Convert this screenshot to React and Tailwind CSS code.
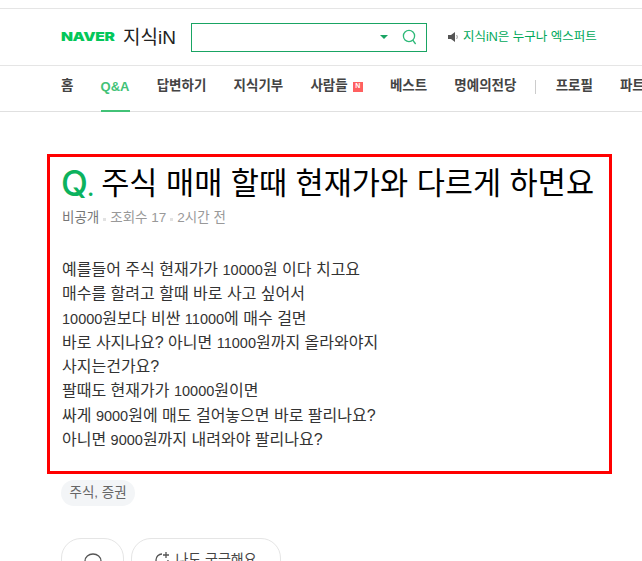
const NAV = [
  { label: '홈' },
  { label: 'Q&A', active: true },
  { label: '답변하기' },
  { label: '지식기부' },
  { label: '사람들', badge: true },
  { label: '베스트' },
  { label: '명예의전당' },
];

const BODY = [
  '예를들어 주식 현재가가 10000원 이다 치고요',
  '매수를 할려고 할때 바로 사고 싶어서',
  '10000원보다 비싼 11000에 매수 걸면',
  '바로 사지나요? 아니면 11000원까지 올라와야지',
  '사지는건가요?',
  '팔때도 현재가가 10000원이면',
  '싸게 9000원에 매도 걸어놓으면 바로 팔리나요?',
  '아니면 9000원까지 내려와야 팔리나요?',
];

const FONT = "font-['Liberation_Sans','Noto_Sans_CJK_KR',sans-serif]";

// digits run narrower than the hangul in the reference
function Line({ text }) {
  return (
    <p className="h-[24.3px]">
      {text.split(/(\d+)/).map((part, i) =>
        /\d/.test(part) ? (
          <span key={i} className="text-[14.5px] leading-none">
            {part}
          </span>
        ) : (
          part
        ),
      )}
    </p>
  );
}

function Dot() {
  return <span className="mx-[4px] inline-block h-[3px] w-[3px] bg-[#e2e2e2] align-[1px]" />;
}

export default function App() {
  return (
    <div className={`h-[561px] w-[642px] overflow-hidden bg-white ${FONT}`}>
      <div className="h-[8px]" />
      {/* Header */}
      <header className="flex h-[58px] items-center border-y border-[#e5e5e5] pl-[61px]">
        <span className="w-[55px] origin-left scale-x-[1.3] font-['Inter',sans-serif] text-[12px] leading-none font-black tracking-[-0.3px] text-[#03c75a]">
          NAVER
        </span>
        <span className="ml-[7px] text-[19px] leading-none text-[#222]">지식iN</span>
        <div className="ml-[15px] flex h-[29px] w-[236px] items-center justify-end border border-[#19a463] pr-[9px]">
          <span className="mr-[14px] h-0 w-0 border-x-[4px] border-t-[4px] border-x-transparent border-t-[#19a463]" />
          <svg width="15" height="16" viewBox="0 0 15 16" fill="none" stroke="#2db978" strokeWidth="1.3">
            <circle cx="7" cy="7" r="5.6" />
            <path d="M10.8 11.2 13.6 15" />
          </svg>
        </div>
        <svg className="ml-[21px]" width="11" height="10" viewBox="0 0 11 10">
          <path d="M0 3h3l4-3v10L3 7H0z" fill="#555" />
          <path d="M8.5 3c1 1 1 3 0 4" stroke="#999" fill="none" />
        </svg>
        <span className="ml-[4px] text-[12.5px] whitespace-nowrap text-[#00a85a]">지식iN은 누구나 엑스퍼트</span>
      </header>

      {/* Nav */}
      <nav className="flex h-[46px] items-center border-b border-[#e0e0e0] pb-[4px] pl-[61px] text-[13.5px] whitespace-nowrap text-[#444]">
        {NAV.map((item) => (
          <div
            key={item.label}
            className={`relative mr-[27.2px] flex h-full shrink-0 items-center font-semibold ${item.active ? 'text-[13px] text-[#42c277]' : ''}`}
          >
            {item.label}
            {item.badge && (
              <span className="ml-[5px] flex h-[10px] w-[10px] items-center justify-center bg-[#ff6060] text-[7px] font-bold text-white">
                N
              </span>
            )}
            {item.active && <span className="absolute right-0 -bottom-[5px] left-0 h-[2px] bg-[#42c277]" />}
          </div>
        ))}
        <span className="-ml-[9px] h-[14px] w-px shrink-0 bg-[#ccc]" />
        <span className="ml-[20px] shrink-0 font-semibold">프로필</span>
        <span className="ml-[27px] shrink-0 font-semibold">파트너</span>
      </nav>

      {/* Question */}
      <main className="mt-[42px] ml-[47px] h-[320px] w-[565px] border-[3px] border-[#ff0000] pt-[3px] pl-[12px]">
        <div className="flex items-center">
          <span className="-ml-[1px] translate-y-[3px] font-['Inter',sans-serif] text-[35px] leading-[40px] font-medium tracking-[-1px] text-[#0cb25e]">
            Q<span className="text-[24px]">.</span>
          </span>
          <h1 className="ml-[8px] text-[30.6px] leading-[40px] font-normal whitespace-nowrap text-black">
            주식 매매 할때 현재가와 다르게 하면요
          </h1>
        </div>
        <div className="mt-[4px] text-[13.5px] leading-[18px] text-[#999]">
          <span className="text-[#777]">비공개</span>
          <Dot />
          조회수 17
          <Dot />
          2시간 전
        </div>
        <div className="mt-[31px] text-[16px] leading-[24.3px] text-[#333]">
          {BODY.map((line) => (
            <Line key={line} text={line} />
          ))}
        </div>
      </main>

      {/* Tags and buttons */}
      <div className="mt-[6px] ml-[61px] inline-flex h-[26px] items-center rounded-full bg-[#f3f5f7] px-[8.5px] text-[13.5px] text-[#666]">
        주식, 증권
      </div>
      <div className="mt-[32px] ml-[61px] flex gap-[7px]">
        <div className="flex h-[60px] w-[63px] justify-center rounded-[20px] border border-[#e5e5e5] pt-[13px]">
          <svg width="20" height="20" viewBox="0 0 20 20" fill="none" stroke="#555" strokeWidth="1.3">
            <ellipse cx="10" cy="9" rx="8" ry="7" />
          </svg>
        </div>
        <div className="flex h-[60px] w-[150px] justify-center gap-[4px] rounded-[20px] border border-[#e5e5e5] pt-[10px] text-[14px] text-[#444]">
          <svg className="mt-[3px]" width="16" height="15" viewBox="0 0 16 15" fill="none" stroke="#555" strokeWidth="1.3">
            <path d="M7 2a6 6 0 1 0 6 6M11 0v6M8 3h6" />
          </svg>
          나도 궁금해요
        </div>
      </div>
    </div>
  );
}
